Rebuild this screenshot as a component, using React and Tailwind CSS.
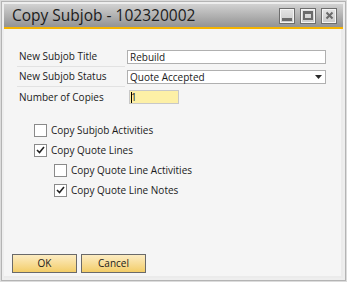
import { useState } from 'react'

function Check({ checked, label }) {
  return (
    <div className="flex items-center h-5">
      <span className="w-[13px] h-[13px] border border-[#8a8a8a] bg-white flex items-center justify-center">
        {checked && (
          <svg width="9" height="8" viewBox="0 0 9 8">
            <path d="M1 4 L3.5 6.5 L8 1" fill="none" stroke="#222" strokeWidth="1.6" />
          </svg>
        )}
      </span>
      <span className="ml-[4px] text-[10px] text-[#1a1a1a]">{label}</span>
    </div>
  )
}

function Row({ label, children }) {
  return (
    <div className="flex items-center h-[20px]">
      <div className="w-[108px] h-full flex items-center border-b border-[#e2e2e2] ml-[-2px] pl-[2px] text-[10px] text-[#1a1a1a]">
        {label}
      </div>
      <div className="ml-[2px]">{children}</div>
    </div>
  )
}

function WinBtn({ children }) {
  return (
    <div className="w-[16px] h-[16px] border border-[#6e6e6e] bg-gradient-to-b from-[#e4e4e4] to-[#c9c9c9] flex items-center justify-center shadow-[inset_0_0_0_1px_#f4f4f4]">
      {children}
    </div>
  )
}

export default function App() {
  const [title] = useState('Rebuild')

  return (
    <div
      className="w-[347px] h-[282px] bg-[#dcdcdc] p-[1px] overflow-hidden"
      style={{ fontFamily: '"Open Sans", "Noto Sans", sans-serif' }}
    >
      <div className="w-full h-full bg-[#eeeeee] border border-[#b4b4b4] p-[2px] flex flex-col">
        <div className="h-[23px] bg-gradient-to-b from-[#d2d2d2] to-[#939393] flex items-center pl-[8px] pr-[6px]">
          <span className="text-[15.5px] text-[#1c1c1c]">Copy Subjob - 102320002</span>
          <div className="ml-auto flex gap-[5px]">
            <WinBtn>
              <span className="w-[10px] h-[3px] bg-[#6a6a6a] mt-[8px]" />
            </WinBtn>
            <WinBtn>
              <span className="w-[10px] h-[9px] border-2 border-t-[3px] border-[#6a6a6a]" />
            </WinBtn>
            <WinBtn>
              <svg width="9" height="9" viewBox="0 0 9 9">
                <path d="M1.5 1.5 L7.5 7.5 M7.5 1.5 L1.5 7.5" stroke="#6a6a6a" strokeWidth="2" />
              </svg>
            </WinBtn>
          </div>
        </div>
        <div className="h-[2px] bg-[#f5b400]" />
        <div className="flex-1 bg-[#f5f5f5] border-r-2 border-b-2 border-[#ebebeb] flex flex-col pl-[15px] pt-[18px] pb-[3px]">
          <Row label="New Subjob Title">
            <div className="w-[199px] h-[14px] border border-[#b0b0b0] bg-white text-[10px] leading-[12px] pl-[2px] text-[#1a1a1a]">
              {title}
            </div>
          </Row>
          <Row label="New Subjob Status">
            <div className="w-[199px] h-[14px] border border-[#b0b0b0] bg-white text-[10px] leading-[12px] pl-[2px] text-[#1a1a1a] flex items-center">
              <span>Quote Accepted</span>
              <svg className="ml-auto mr-[3px]" width="7" height="4" viewBox="0 0 7 4">
                <path d="M0 0 L7 0 L3.5 4 Z" fill="#2a2a2a" />
              </svg>
            </div>
          </Row>
          <div className="flex items-center h-[20px]">
            <div className="w-[108px] text-[10px] text-[#1a1a1a]">Number of Copies</div>
            <div className="ml-[2px] w-[50px] h-[14px] border border-[#c8c8c8] bg-[#fdf0a6] flex items-center pl-[1px]">
              <span className="w-[1px] h-[11px] bg-black" />
              <span className="text-[10px] text-[#1a1a1a] ml-[-1px]">1</span>
            </div>
          </div>
          <div className="flex flex-col pl-[15px] mt-[13px]">
            <Check label="Copy Subjob Activities" />
            <Check checked label="Copy Quote Lines" />
            <div className="pl-[20px] flex flex-col">
              <Check label="Copy Quote Line Activities" />
              <Check checked label="Copy Quote Line Notes" />
            </div>
          </div>
          <div className="mt-auto flex gap-[4px] ml-[-7px]">
            <button className="w-[65px] h-[19px] border border-[#6a6a6a] bg-gradient-to-b from-[#fcecc2] to-[#f3cd66] text-[10px] text-[#1a1a1a]">
              OK
            </button>
            <button className="w-[65px] h-[19px] border border-[#6a6a6a] bg-gradient-to-b from-[#fcecc2] to-[#f3cd66] text-[10px] text-[#1a1a1a]">
              Cancel
            </button>
          </div>
        </div>
      </div>
    </div>
  )
}
